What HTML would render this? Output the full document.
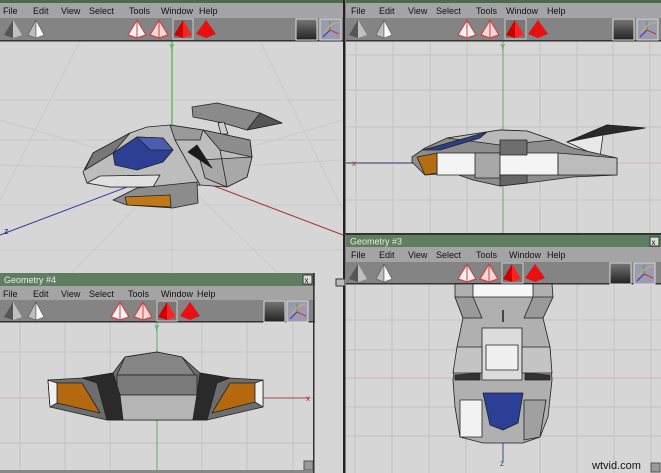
<!DOCTYPE html>
<html><head><meta charset="utf-8"><style>
html,body{margin:0;padding:0;background:#d6d6d6;width:661px;height:473px;overflow:hidden}
svg{display:block}
text{font-family:"Liberation Sans",sans-serif}
</style></head><body>
<svg width="661" height="473" viewBox="0 0 661 473" xmlns="http://www.w3.org/2000/svg">
<defs>
<g id="pg"><polygon points="-9,6 0,-9 0,9" fill="#555"/><polygon points="0,-9 9,6 0,9" fill="#c0c0c0"/></g>
<g id="pw"><polygon points="-8,6 0,-9 0,9" fill="#bdbdbd" stroke="#555" stroke-width="0.6"/><polygon points="0,-9 8,6 0,9" fill="#fafafa" stroke="#555" stroke-width="0.6"/></g>
<g id="pr1"><polygon points="-9,6 0,-9 9,6 0,9" fill="#f2f2f2" stroke="#c44" stroke-width="1.2"/><line x1="0" y1="-9" x2="0" y2="9" stroke="#c44"/></g>
<g id="pr2"><polygon points="-9,6 0,-9 9,6 0,9" fill="#f3d6d6" stroke="#c44" stroke-width="1.2"/><line x1="0" y1="-9" x2="0" y2="9" stroke="#c44"/></g>
<g id="pr3"><polygon points="-9,6 0,-9 0,9" fill="#c00"/><polygon points="0,-9 9,6 0,9" fill="#f22"/></g>
<g id="pr4"><polygon points="-10,5 0,-9 10,5 0,9" fill="#e81010"/></g>
<linearGradient id="dk" x1="0" y1="0" x2="0" y2="1"><stop offset="0" stop-color="#777"/><stop offset="1" stop-color="#222"/></linearGradient>
<g id="sq1"><rect x="0" y="0" width="21" height="21" fill="url(#dk)" stroke="#ddd"/></g>
<g id="sq2"><rect x="0" y="0" width="21" height="21" fill="#9a9ab0" stroke="#ddd"/><line x1="3" y1="18" x2="10" y2="11" stroke="#33c"/><line x1="10" y1="11" x2="19" y2="15" stroke="#c33"/><line x1="10" y1="11" x2="10" y2="2" stroke="#3a3"/><path d="M4 14 Q12 2 19 4" stroke="#da6" fill="none"/></g>
</defs>

<!-- ===== Window A (top-left) ===== -->
<rect x="0" y="0" width="344" height="473" fill="#d6d6d6"/>
<g stroke="#c9c9c9" stroke-width="1">
<line x1="172" y1="170" x2="0" y2="120"/><line x1="172" y1="170" x2="0" y2="165"/><line x1="172" y1="170" x2="60" y2="285"/>
<line x1="172" y1="170" x2="343" y2="120"/><line x1="172" y1="170" x2="343" y2="160"/><line x1="172" y1="170" x2="290" y2="285"/>
<line x1="0" y1="100" x2="343" y2="100"/><line x1="0" y1="140" x2="343" y2="140"/><line x1="0" y1="205" x2="343" y2="205"/><line x1="0" y1="250" x2="343" y2="250"/>
<line x1="80" y1="41" x2="0" y2="200"/><line x1="260" y1="41" x2="343" y2="210"/><line x1="172" y1="170" x2="172" y2="285"/>
</g>
<line x1="172" y1="41" x2="172" y2="150" stroke="#3a3" stroke-width="1"/>
<line x1="172" y1="170" x2="343" y2="235" stroke="#a33"/>
<line x1="172" y1="170" x2="0" y2="235" stroke="#33a"/>
<text x="4" y="234" font-size="9" fill="#228">z</text>
<rect x="0" y="0" width="344" height="3" fill="#4d6a4d"/>
<rect x="0" y="3" width="344" height="15" fill="#a4a4a4"/>
<rect x="0" y="18" width="344" height="22" fill="#848484"/>
<rect x="0" y="40" width="344" height="1.5" fill="#333"/>
<g font-size="9" fill="#111">
<text x="3" y="14">File</text><text x="33" y="14">Edit</text><text x="61" y="14">View</text><text x="89" y="14">Select</text><text x="129" y="14">Tools</text><text x="161" y="14">Window</text><text x="199" y="14">Help</text>
</g>
<use href="#pg" x="13" y="29"/><use href="#pw" x="36" y="29"/>
<use href="#pr1" x="137" y="29"/><use href="#pr2" x="159" y="29"/>
<rect x="173" y="19" width="20" height="20" fill="#777" stroke="#ccc"/><use href="#pr3" x="183" y="29"/><use href="#pr4" x="206" y="29"/>
<use href="#sq1" x="296" y="19"/><use href="#sq2" x="320" y="19"/>
<text x="169" y="50" font-size="8" fill="#3a3">Y</text>

<!-- ship A -->
<g stroke="#222" stroke-width="0.8" stroke-linejoin="round">
<polygon points="192,107 217,103 260,113 282,123 247,130 223,123 193,117" fill="#8a8a8a"/>
<polygon points="260,113 282,123 247,130" fill="#555"/>
<polygon points="218,123 224,122 228,134 221,134" fill="#ccc"/>
<polygon points="83,172 93,153 130,133 147,127 170,125 203,130 250,140 252,157 247,177 227,187 200,185 153,187 110,187 87,183" fill="#bdbdbd"/>
<polygon points="93,153 130,133 113,153 85,170" fill="#777"/>
<polygon points="170,125 203,130 200,140 175,140" fill="#9a9a9a"/>
<polygon points="203,130 250,140 252,157 220,150" fill="#8d8d8d"/>
<polygon points="200,160 252,157 247,177 227,187 205,178" fill="#a8a8a8"/>
<polygon points="87,183 110,187 153,187 160,175 100,176" fill="#e0e0e0"/>
<polygon points="113,153 137,137 163,138 173,150 163,162 137,170 115,165" fill="#2c3f95"/>
<polygon points="137,137 163,138 173,150 150,150" fill="#4a5db0"/>
<polygon points="188,152 197,145 212,168" fill="#1a1a1a"/>
<line x1="175" y1="140" x2="200" y2="185"/><line x1="220" y1="150" x2="227" y2="187"/>
<polygon points="113,200 137,188 197,182 198,203 173,208 127,205" fill="#8c8c8c"/>
<polygon points="125,197 170,195 171,207 127,205" fill="#c07818"/>
</g>

<!-- divider -->
<rect x="343" y="0" width="2.5" height="473" fill="#222"/>

<!-- ===== Window B (top-right) ===== -->
<rect x="346" y="41" width="315" height="193" fill="#d6d6d6"/>
<g stroke="#c3c3c3">
<line x1="393" y1="41" x2="393" y2="234"/><line x1="430" y1="41" x2="430" y2="234"/><line x1="467" y1="41" x2="467" y2="234"/><line x1="540" y1="41" x2="540" y2="234"/><line x1="577" y1="41" x2="577" y2="234"/><line x1="613" y1="41" x2="613" y2="234"/><line x1="650" y1="41" x2="650" y2="234"/><line x1="356" y1="41" x2="356" y2="234"/>
<line x1="346" y1="90" x2="661" y2="90"/><line x1="346" y1="127" x2="661" y2="127"/><line x1="346" y1="200" x2="661" y2="200"/><line x1="346" y1="55" x2="661" y2="55"/>
</g>
<line x1="503" y1="41" x2="503" y2="234" stroke="#6a6" />
<line x1="346" y1="163" x2="661" y2="163" stroke="#cfbfbf"/>
<line x1="346" y1="163" x2="415" y2="163" stroke="#336"/>
<text x="352" y="166" font-size="8" fill="#a33">x</text>
<rect x="346" y="0" width="315" height="3" fill="#4d6a4d"/>
<rect x="346" y="3" width="315" height="15" fill="#a4a4a4"/>
<rect x="346" y="18" width="315" height="22" fill="#848484"/>
<rect x="346" y="40" width="315" height="1.5" fill="#333"/>
<g font-size="9" fill="#111">
<text x="351" y="14">File</text><text x="379" y="14">Edit</text><text x="408" y="14">View</text><text x="436" y="14">Select</text><text x="476" y="14">Tools</text><text x="506" y="14">Window</text><text x="547" y="14">Help</text>
</g>
<use href="#pg" x="358" y="29"/><use href="#pw" x="384" y="29"/>
<use href="#pr1" x="467" y="29"/><use href="#pr2" x="490" y="29"/>
<rect x="505" y="19" width="21" height="20" fill="#777" stroke="#ccc"/><use href="#pr3" x="515" y="29"/><use href="#pr4" x="538" y="29"/>
<use href="#sq1" x="613" y="19"/><use href="#sq2" x="637" y="19"/>
<text x="500" y="50" font-size="8" fill="#3a3">Y</text>

<!-- ship B -->
<g stroke="#222" stroke-width="0.8" stroke-linejoin="round">
<polygon points="567,142 607,125 645,128 603,135 600,157" fill="#e8e8e8"/>
<polygon points="567,142 607,125 645,128 603,135" fill="#2a2a2a"/>
<polygon points="412,157 425,148 447,138 500,130 527,131 553,140 573,148 617,158 617,175 573,177 527,183 500,186 473,180 453,173 425,175 412,162" fill="#8e8e8e"/>
<polygon points="447,138 500,130 527,131 553,140 500,145" fill="#b9b9b9"/>
<polygon points="437,153 558,153 558,175 437,175" fill="#f4f4f4"/>
<polygon points="475,153 500,153 500,178 475,178" fill="#a8a8a8"/>
<polygon points="500,140 527,140 527,155 500,155" fill="#6e6e6e"/>
<polygon points="500,175 527,175 527,183 500,186" fill="#666"/>
<polygon points="558,153 617,158 617,175 558,175" fill="#bcbcbc"/>
<polygon points="417,157 437,153 437,173 425,175" fill="#b56d12"/>
<polygon points="423,150 487,132 480,138 440,150" fill="#2c3f85"/>
</g>

<!-- ===== Window 4 (bottom-left) ===== -->
<rect x="0" y="322" width="314" height="151" fill="#d6d6d6"/>
<g stroke="#c3c3c3">
<line x1="20" y1="322" x2="20" y2="470"/><line x1="65" y1="322" x2="65" y2="470"/><line x1="110" y1="322" x2="110" y2="470"/><line x1="202" y1="322" x2="202" y2="470"/><line x1="247" y1="322" x2="247" y2="470"/><line x1="293" y1="322" x2="293" y2="470"/>
<line x1="0" y1="352" x2="314" y2="352"/><line x1="0" y1="443" x2="314" y2="443"/>
</g>
<line x1="157" y1="322" x2="157" y2="470" stroke="#6a6"/>
<line x1="0" y1="398" x2="314" y2="398" stroke="#c8b8b8"/>
<line x1="262" y1="398" x2="310" y2="398" stroke="#a44"/>
<text x="306" y="401" font-size="8" fill="#c22">x</text>
<text x="154" y="331" font-size="8" fill="#3a3">Y</text>
<rect x="304" y="461" width="9" height="9" fill="#999" stroke="#555"/>
<rect x="0" y="470" width="314" height="3" fill="#888"/>
<rect x="0" y="273" width="315" height="13" fill="#5f7d5f"/>
<text x="4" y="283" font-size="9" fill="#e8f0e8">Geometry #4</text>
<rect x="303" y="275" width="9" height="9" fill="#ddd" stroke="#333"/><text x="304.5" y="283" font-size="8" fill="#111">x</text>
<rect x="0" y="286" width="315" height="14" fill="#a4a4a4"/>
<rect x="0" y="300" width="315" height="22" fill="#848484"/>
<rect x="0" y="321" width="315" height="1.5" fill="#333"/>
<rect x="313" y="273" width="1.5" height="200" fill="#333"/>
<g font-size="9" fill="#111">
<text x="3" y="297">File</text><text x="33" y="297">Edit</text><text x="61" y="297">View</text><text x="89" y="297">Select</text><text x="128" y="297">Tools</text><text x="161" y="297">Window</text><text x="197" y="297">Help</text>
</g>
<use href="#pg" x="13" y="311"/><use href="#pw" x="36" y="311"/>
<use href="#pr1" x="120" y="311"/><use href="#pr2" x="143" y="311"/>
<rect x="157" y="301" width="20" height="20" fill="#777" stroke="#ccc"/><use href="#pr3" x="167" y="311"/><use href="#pr4" x="190" y="311"/>
<use href="#sq1" x="264" y="301"/><use href="#sq2" x="287" y="301"/>

<!-- ship 4 -->
<g stroke="#222" stroke-width="0.8" stroke-linejoin="round">
<polygon points="125,357 157,352 182,357 200,373 230,378 263,380 263,407 207,420 193,420 123,420 107,420 50,407 48,380 82,378 113,373" fill="#6d6d6d"/>
<polygon points="125,357 157,352 182,357 195,375 117,375" fill="#858585"/>
<polygon points="117,375 197,375 197,395 117,395" fill="#7a7a7a"/>
<polygon points="117,395 197,395 193,420 123,420" fill="#b5b5b5"/>
<polygon points="82,378 113,373 120,395 123,420 107,420 97,383" fill="#2a2a2a"/>
<polygon points="230,378 200,373 197,395 193,420 207,420 217,383" fill="#2a2a2a"/>
<polygon points="57,383 82,383 100,413 57,403" fill="#b4690f"/>
<polygon points="230,383 255,383 255,402 212,413" fill="#b4690f"/>
<polygon points="48,380 57,383 57,403 50,407" fill="#f0f0f0"/>
<polygon points="263,380 255,383 255,402 263,407" fill="#f0f0f0"/>
</g>

<!-- ===== Window 3 (bottom-right) ===== -->
<rect x="346" y="284" width="315" height="189" fill="#d6d6d6"/>
<g stroke="#c3c3c3">
<line x1="392" y1="284" x2="392" y2="473"/><line x1="429" y1="284" x2="429" y2="473"/><line x1="466" y1="284" x2="466" y2="473"/><line x1="540" y1="284" x2="540" y2="473"/><line x1="577" y1="284" x2="577" y2="473"/><line x1="614" y1="284" x2="614" y2="473"/><line x1="651" y1="284" x2="651" y2="473"/><line x1="355" y1="284" x2="355" y2="473"/>
<line x1="346" y1="320" x2="661" y2="320"/><line x1="346" y1="350" x2="661" y2="350"/><line x1="346" y1="407" x2="661" y2="407"/><line x1="346" y1="436" x2="661" y2="436"/>
</g>
<line x1="503" y1="284" x2="503" y2="462" stroke="#448"/>
<line x1="346" y1="378" x2="661" y2="378" stroke="#cdb5b5"/>
<text x="500" y="466" font-size="8" fill="#262">z</text>
<rect x="346" y="235" width="315" height="12" fill="#5f7d5f"/>
<text x="350" y="244.5" font-size="9" fill="#e8f0e8">Geometry #3</text>
<rect x="650" y="237" width="9" height="9" fill="#ddd" stroke="#333"/><text x="651.5" y="245" font-size="8" fill="#111">x</text>
<rect x="346" y="247" width="315" height="15" fill="#a4a4a4"/>
<rect x="346" y="262" width="315" height="22" fill="#848484"/>
<rect x="346" y="283" width="315" height="1.5" fill="#333"/>
<rect x="343" y="233" width="318" height="2" fill="#333"/>
<rect x="336" y="279" width="9" height="7" fill="#bbb" stroke="#333"/>
<g font-size="9" fill="#111">
<text x="351" y="258">File</text><text x="379" y="258">Edit</text><text x="408" y="258">View</text><text x="436" y="258">Select</text><text x="476" y="258">Tools</text><text x="509" y="258">Window</text><text x="547" y="258">Help</text>
</g>
<use href="#pg" x="358" y="273"/><use href="#pw" x="384" y="273"/>
<use href="#pr1" x="467" y="273"/><use href="#pr2" x="489" y="273"/>
<rect x="502" y="263" width="21" height="20" fill="#777" stroke="#ccc"/><use href="#pr3" x="512" y="273"/><use href="#pr4" x="535" y="273"/>
<use href="#sq1" x="610" y="263"/><use href="#sq2" x="634" y="263"/>

<!-- ship 3 -->
<g stroke="#222" stroke-width="0.8" stroke-linejoin="round">
<polygon points="455,284 552,284 553,297 543,318 550,347 552,380 548,417 540,437 523,443 500,443 483,443 460,437 455,407 453,380 457,347 463,318 455,297" fill="#b0b0b0"/>
<polygon points="473,284 533,284 533,297 473,297" fill="#f7f7f7"/>
<polygon points="455,297 473,297 482,318 463,318" fill="#9a9a9a"/>
<polygon points="553,297 533,297 524,318 543,318" fill="#9a9a9a"/>
<polygon points="482,328 522,328 522,380 482,380" fill="#dcdcdc"/>
<polygon points="486,345 518,345 518,370 486,370" fill="#f0f0f0"/>
<polygon points="457,347 482,347 482,373 453,373" fill="#c4c4c4"/>
<polygon points="550,347 522,347 522,373 552,373" fill="#c4c4c4"/>
<polygon points="455,375 480,373 480,380 455,380" fill="#333"/>
<polygon points="525,373 550,375 550,380 525,380" fill="#333"/>
<polygon points="483,393 523,393 518,423 503,430 490,425" fill="#2b3f96"/>
<polygon points="460,400 482,400 482,437 460,437" fill="#f2f2f2"/>
<polygon points="524,400 546,400 540,437 524,440" fill="#a0a0a0"/>
<line x1="503" y1="310" x2="503" y2="322" stroke-width="1.5"/>
</g>
<text x="592" y="469" font-size="11" fill="#111">wtvid.com</text>
<rect x="651" y="463" width="9" height="9" fill="#999" stroke="#555"/>
</svg>
</body></html>
